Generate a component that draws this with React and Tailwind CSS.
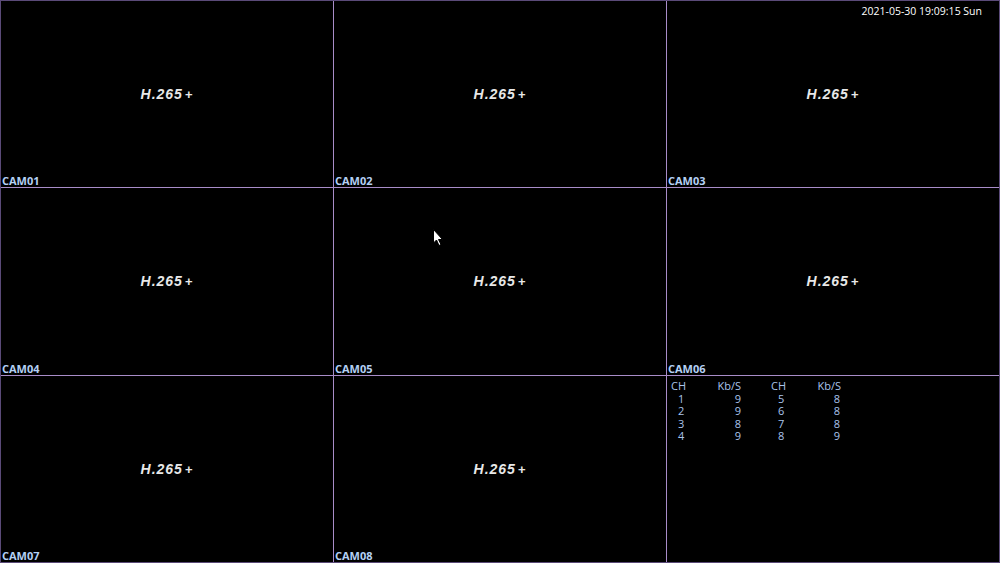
import React from "react";

const cams = ["CAM01","CAM02","CAM03","CAM04","CAM05","CAM06","CAM07","CAM08"];
const rows = [["1","9","5","8"],["2","9","6","8"],["3","8","7","8"],["4","9","8","9"]];

function Cell({ name, cursor }) {
  return (
    <div className="relative bg-black flex flex-col">
      <div className="flex-1 pt-[13px] flex items-center justify-center">
        <span className="text-[14px] font-bold italic text-[#e8e8e8] tracking-[1px] [font-family:'Liberation_Sans',Arial,sans-serif]">H.265<span className="ml-[2px] not-italic text-[13px]">+</span></span>
      </div>
      <div className="h-[13px] leading-[13px] pl-[1px] text-[11px] font-bold text-[#b4d0f4] [font-family:'Open_Sans',sans-serif]">{name}</div>
      {cursor && (
        <svg className="absolute left-[99px] top-[41px]" width="12" height="18" viewBox="0 0 12 18">
          <path d="M0.5 0.5 L0.5 14 L3.5 11 L6 16.5 L8 15.5 L5.5 10.5 L9.5 10.5 Z" fill="#fff" stroke="#000" strokeWidth="1" />
        </svg>
      )}
    </div>
  );
}

export default function App() {
  return (
    <div className="w-[1000px] h-[563px] bg-black border border-[#5a4a78] relative overflow-hidden">
      <div className="grid grid-cols-[332px_332px_332px] grid-rows-[186px_187px_186px] gap-px bg-[#a88cc8] w-[998px] h-[561px]">
        {cams.map((c, i) => (
          <Cell key={c} name={c} cursor={i === 4} />
        ))}
        <div className="bg-black pt-[4px] pl-[4px] text-[11px] leading-[12.6px] text-[#aac4ec] [font-family:'Open_Sans',sans-serif]">
          <div className="grid grid-cols-[15px_55px_45px_55px]">
            <span>CH</span>
            <span className="text-right">Kb/S</span>
            <span className="pl-[30px]">CH</span>
            <span className="text-right">Kb/S</span>
            {rows.map((r, i) => (
              <React.Fragment key={i}>
                <span className="pl-[7px]">{r[0]}</span>
                <span className="text-right">{r[1]}</span>
                <span className="pl-[37px]">{r[2]}</span>
                <span className="text-right pr-[1px]">{r[3]}</span>
              </React.Fragment>
            ))}
          </div>
        </div>
      </div>
      <div className="absolute right-[17px] top-[3px] text-[10.5px] text-white [font-family:'Open_Sans',sans-serif]">2021-05-30 19:09:15 Sun</div>
    </div>
  );
}
